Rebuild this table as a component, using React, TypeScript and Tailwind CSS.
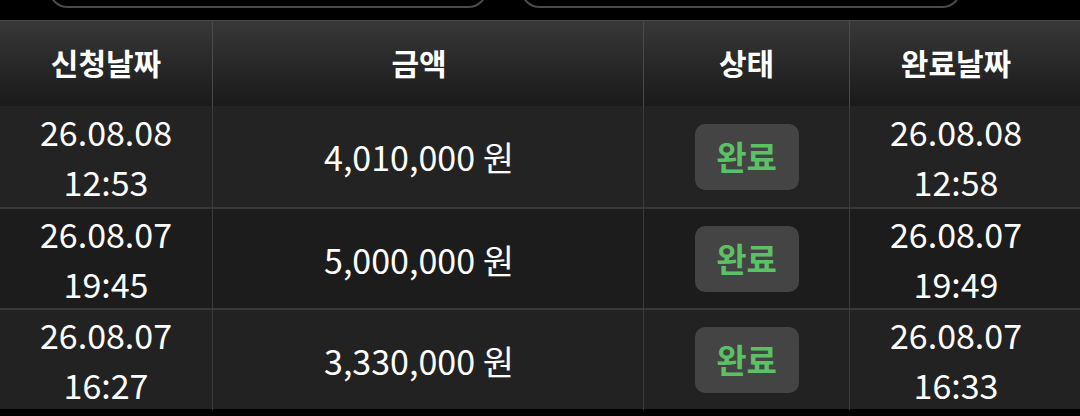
// Withdrawal history table (dark theme)

const ROWS = [
  { reqDate: '26.08.08', reqTime: '12:53', amount: '4,010,000 원', doneDate: '26.08.08', doneTime: '12:58', bg: 'bg-[#232323]' },
  { reqDate: '26.08.07', reqTime: '19:45', amount: '5,000,000 원', doneDate: '26.08.07', doneTime: '19:49', bg: 'bg-[#1c1c1c]' },
  { reqDate: '26.08.07', reqTime: '16:27', amount: '3,330,000 원', doneDate: '26.08.07', doneTime: '16:33', bg: 'bg-[#222222]' },
]

const COLS = 'grid grid-cols-[212px_431px_206px_1fr]'

function DateCell({ date, time, className = '' }: { date: string; time: string; className?: string }) {
  return (
    <div className={`flex flex-col items-center justify-center text-[34px] leading-[50px] text-white ${className}`}>
      <span>{date}</span>
      <span>{time}</span>
    </div>
  )
}

export default function App() {
  return (
    <div className="w-[1080px] h-[416px] bg-black overflow-hidden font-['Noto_Sans_CJK_KR','Noto_Sans',sans-serif]">
      {/* Top filter boxes (cut off by the top edge) */}
      <div className="h-5 flex items-end gap-[32px] pl-[48px] pb-[12px] overflow-hidden">
        <div className="w-[440px] h-[40px] shrink-0 rounded-[20px] border-2 border-[#4a4a4a]" />
        <div className="w-[442px] h-[40px] shrink-0 rounded-[20px] border-2 border-[#4a4a4a]" />
      </div>

      {/* Header */}
      <div className={`${COLS} h-[86px] border-t border-[#474747] bg-gradient-to-b from-[#383838] to-[#1a1a1a] text-white text-[30px] font-bold`}>
        <div className="flex items-center justify-center pb-[3px]">신청날짜</div>
        <div className="flex items-center justify-center pb-[3px] border-l border-[#4a4a4a] pr-[18px]">금액</div>
        <div className="flex items-center justify-center pb-[3px] border-l border-[#4a4a4a]">상태</div>
        <div className="flex items-center justify-center pb-[3px] border-l border-[#4a4a4a] pr-[18px]">완료날짜</div>
      </div>

      {/* Rows */}
      {ROWS.map((r, i) => (
        <div key={i} className={`${COLS} h-[101px] ${r.bg} ${i > 0 ? 'border-t-2 border-[#393939]' : ''}`}>
          <DateCell date={r.reqDate} time={r.reqTime} />
          <div className="flex items-center justify-center border-l border-[#3c3c3c] pr-[18px] text-[34px] text-white">{r.amount}</div>
          <div className="flex items-center justify-center border-l border-[#3c3c3c]">
            <span className="w-[104px] h-[66px] rounded-[10px] bg-[#444444] flex items-center justify-center text-[33px] font-bold text-[#5cc064]">완료</span>
          </div>
          <DateCell date={r.doneDate} time={r.doneTime} className="border-l border-[#3c3c3c] pr-[18px]" />
        </div>
      ))}
    </div>
  )
}
